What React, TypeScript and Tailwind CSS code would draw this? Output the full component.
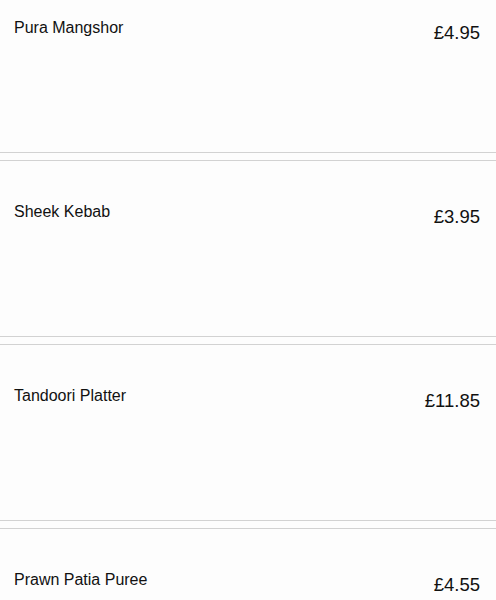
import React from 'react'

const items = [
    { name: 'Pura Mangshor', price: '£4.95' },
    { name: 'Sheek Kebab', price: '£3.95' },
    { name: 'Tandoori Platter', price: '£11.85' },
    { name: 'Prawn Patia Puree', price: '£4.55' },
]

export default function App(): React.ReactElement {
    return (
        <div className="h-[600px] overflow-hidden bg-[#fdfdfd] text-[#111] font-['Liberation_Sans',Arial,sans-serif]">
            <ul className="-mt-[24px] flex flex-col gap-[7px]">
                {items.map((item) => (
                    <li
                        key={item.name}
                        className="h-[177px] border-y border-[#d2d2d2] pl-[14px] pr-[16px] pt-[43px] flex justify-between items-start"
                    >
                        <span className="text-[16px] leading-[16px]">{item.name}</span>
                        <span className="mt-[4px] text-[18.5px] leading-[18px]">{item.price}</span>
                    </li>
                ))}
            </ul>
        </div>
    )
}
